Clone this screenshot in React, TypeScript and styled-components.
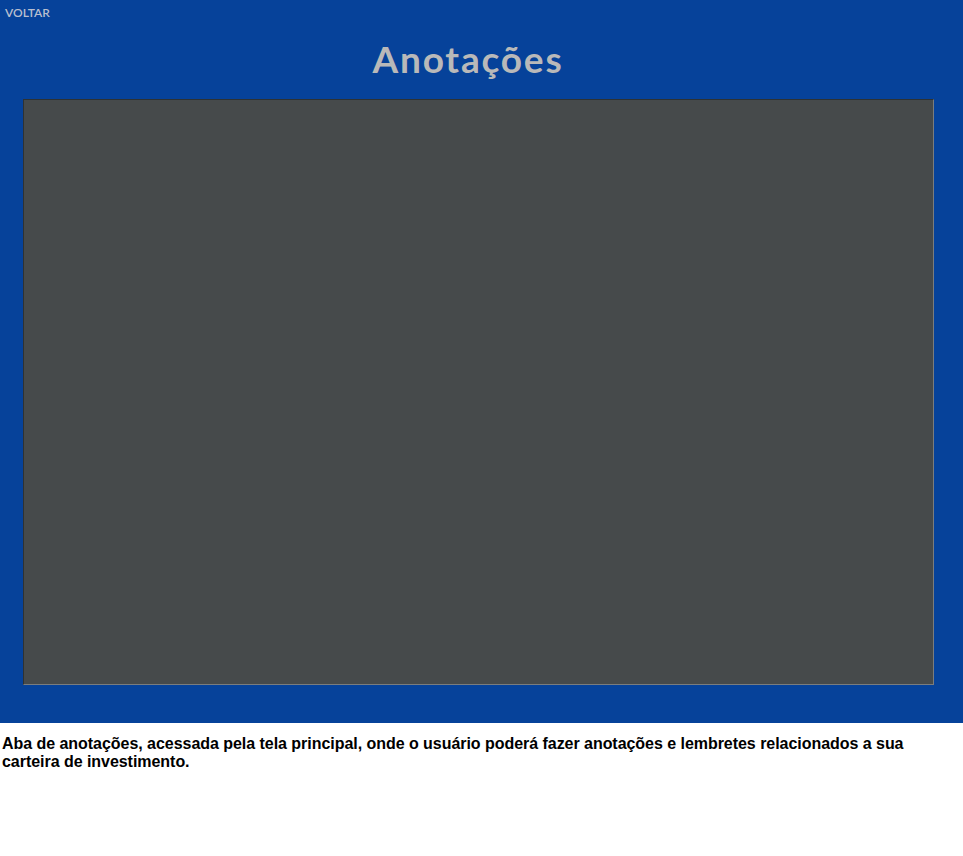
import React from "react";
import styled, { createGlobalStyle } from "styled-components";

const Global = createGlobalStyle`
  html, body { margin: 0; padding: 0; background: #ffffff; }
  body { font-family: "Liberation Sans", Arial, sans-serif; }
`;

const Screen = styled.div`
  background: #06429a;
  height: 723px;
  display: flex;
  flex-direction: column;
  box-sizing: border-box;
`;

const BackLink = styled.div`
  font-family: "Lato", "DejaVu Sans", sans-serif;
  font-size: 12px;
  font-weight: 600;
  color: #b9bfcf;
  padding: 6px 0 0 5px;
  height: 14px;
  line-height: 14px;
`;

const Title = styled.h1`
  margin: 17px 0 0 0;
  padding-right: 27px;
  text-align: center;
  font-family: "Lato", "DejaVu Sans", sans-serif;
  font-weight: bold;
  font-size: 37px;
  line-height: 44px;
  color: #b9b9b9;
  letter-spacing: 1.8px;
`;

const NotesArea = styled.textarea`
  margin: 18px 0 0 23px;
  width: 911px;
  height: 586px;
  box-sizing: border-box;
  background: #464a4b;
  border: 1px solid;
  border-color: #2e3233 #7a7d7e #7a7d7e #2e3233;
  resize: none;
  outline: none;
  color: #dddddd;
  font-family: "Liberation Sans", sans-serif;
  font-size: 14px;
  padding: 4px;
`;

const Caption = styled.p`
  margin: 12px 0 0 2px;
  font-family: "Liberation Sans", Arial, sans-serif;
  font-weight: bold;
  font-size: 16px;
  line-height: 18px;
  letter-spacing: -0.04px;
  color: #000000;
`;

export default function App() {
  return (
    <>
      <Global />
      <Screen>
        <BackLink>VOLTAR</BackLink>
        <Title>Anotações</Title>
        <NotesArea />
      </Screen>
      <Caption>
        Aba de anotações, acessada pela tela principal, onde o usuário poderá fazer anotações e lembretes relacionados a sua carteira de investimento.
      </Caption>
    </>
  );
}
